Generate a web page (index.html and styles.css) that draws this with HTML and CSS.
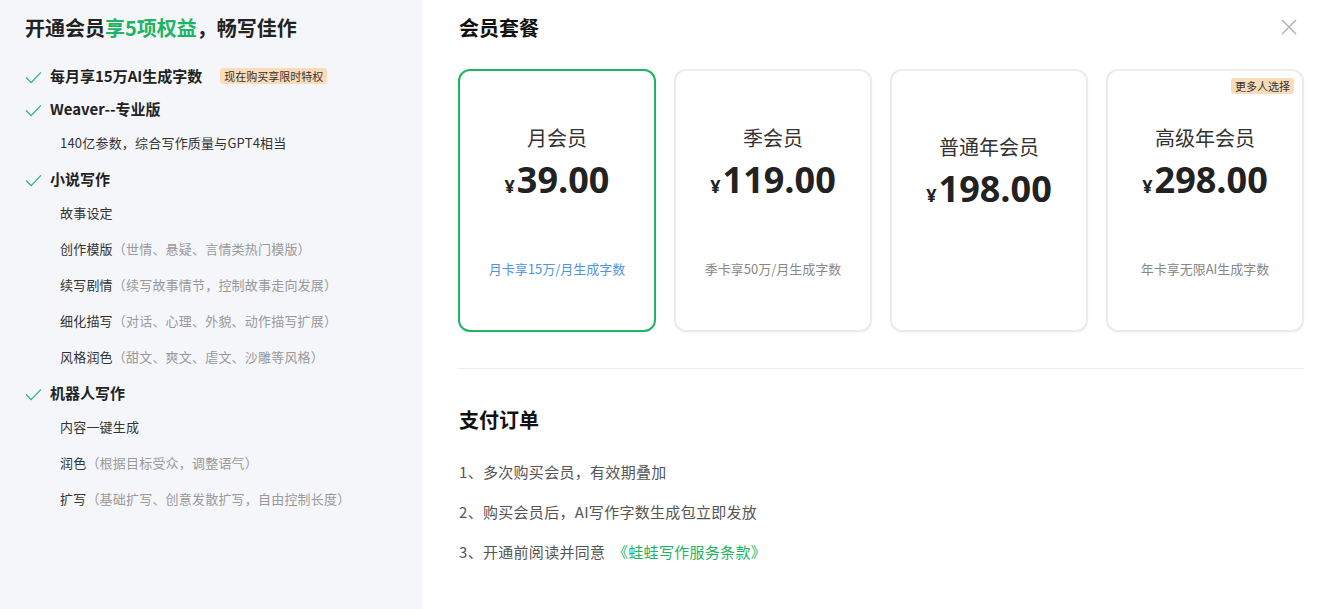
FILE: index.html
```html
<!DOCTYPE html>
<html lang="zh-CN">

<head>
    <meta charset="UTF-8">
    <meta name="viewport" content="width=device-width, initial-scale=1.0">
    <title>开通会员</title>
    <link rel="stylesheet" href="styles.css">
</head>

<body>
    <div class="vip-dialog">
        <!-- 左侧：会员权益 -->
        <aside class="benefits">
            <h1 class="benefits-title">开通会员<span class="green">享5项权益</span>，畅写佳作</h1>
            <ul class="benefit-list">
                <li class="benefit">
                    <svg class="check" viewBox="0 0 18 14"><polyline points="1,7 6.5,12.5 17,1.5" /></svg>
                    每月享15万AI生成字数
                    <span class="tag">现在购买享限时特权</span>
                </li>
                <li class="benefit">
                    <svg class="check" viewBox="0 0 18 14"><polyline points="1,7 6.5,12.5 17,1.5" /></svg>
                    Weaver--专业版
                </li>
                <li class="sub">140亿参数，综合写作质量与GPT4相当</li>
                <li class="benefit">
                    <svg class="check" viewBox="0 0 18 14"><polyline points="1,7 6.5,12.5 17,1.5" /></svg>
                    小说写作
                </li>
                <li class="sub">故事设定</li>
                <li class="sub">创作模版<span class="note">（世情、悬疑、言情类热门模版）</span></li>
                <li class="sub">续写剧情<span class="note">（续写故事情节，控制故事走向发展）</span></li>
                <li class="sub">细化描写<span class="note">（对话、心理、外貌、动作描写扩展）</span></li>
                <li class="sub">风格润色<span class="note">（甜文、爽文、虐文、沙雕等风格）</span></li>
                <li class="benefit">
                    <svg class="check" viewBox="0 0 18 14"><polyline points="1,7 6.5,12.5 17,1.5" /></svg>
                    机器人写作
                </li>
                <li class="sub">内容一键生成</li>
                <li class="sub">润色<span class="note">（根据目标受众，调整语气）</span></li>
                <li class="sub">扩写<span class="note">（基础扩写、创意发散扩写，自由控制长度）</span></li>
            </ul>
        </aside>

        <!-- 右侧：套餐与支付 -->
        <main class="plans">
            <div class="plans-header">
                <h2 class="section-title">会员套餐</h2>
                <button class="close-btn" aria-label="关闭">
                    <svg viewBox="0 0 16 16"><path d="M1 1 L15 15 M15 1 L1 15" /></svg>
                </button>
            </div>

            <div class="plan-grid">
                <div class="plan-card active">
                    <div class="plan-name">月会员</div>
                    <div class="plan-price"><span class="yen">¥</span>39.00</div>
                    <div class="plan-desc">月卡享15万/月生成字数</div>
                </div>
                <div class="plan-card">
                    <div class="plan-name">季会员</div>
                    <div class="plan-price"><span class="yen">¥</span>119.00</div>
                    <div class="plan-desc">季卡享50万/月生成字数</div>
                </div>
                <div class="plan-card">
                    <div class="plan-name">普通年会员</div>
                    <div class="plan-price"><span class="yen">¥</span>198.00</div>
                    <div class="plan-desc"></div>
                </div>
                <div class="plan-card">
                    <span class="tag corner">更多人选择</span>
                    <div class="plan-name">高级年会员</div>
                    <div class="plan-price"><span class="yen">¥</span>298.00</div>
                    <div class="plan-desc">年卡享无限AI生成字数</div>
                </div>
            </div>

            <hr class="divider">

            <h2 class="section-title order-title">支付订单</h2>
            <ol class="order-notes">
                <li>1、多次购买会员，有效期叠加</li>
                <li>2、购买会员后，AI写作字数生成包立即发放</li>
                <li>3、开通前阅读并同意 <a class="terms" href="#">《蛙蛙写作服务条款》</a></li>
            </ol>
        </main>
    </div>
</body>

</html>
```

FILE: styles.css
```css
* {
    box-sizing: border-box;
}

body {
    margin: 0;
    font-family: "Noto Sans CJK SC", "Noto Sans", sans-serif;
    color: #222;
    background-color: #fff;
}

.vip-dialog {
    display: flex;
    height: 609px;
}

.green {
    color: #1eb465;
}

/* 左侧权益 */
.benefits {
    width: 422px;
    flex-shrink: 0;
    background-color: #f5f6fa;
    padding: 16px 0 0 25px;
}

.benefits-title {
    margin: 0 0 19px;
    font-size: 20px;
    line-height: 24px;
    font-weight: bold;
    color: #222;
}

.benefit-list {
    list-style: none;
    margin: 0;
    padding: 0;
}

.benefit {
    display: flex;
    align-items: center;
    height: 33px;
    font-size: 15px;
    font-weight: bold;
    color: #222;
}

.sub + .benefit {
    margin-top: 1px;
}

.check {
    width: 17px;
    height: 13px;
    margin: 3px 8px 0 0;
    fill: none;
    stroke: #2bb47a;
    stroke-width: 1.4;
}

.sub {
    height: 36px;
    line-height: 36px;
    padding-left: 35px;
    font-size: 13px;
    letter-spacing: 0.2px;
    color: #333;
}

.note {
    color: #999;
}

.tag {
    display: inline-block;
    height: 16px;
    line-height: 16px;
    padding: 0 4px;
    margin-left: 18px;
    border-radius: 3px;
    background-color: #fbdcb9;
    font-size: 11px;
    font-weight: normal;
    color: #333;
}

/* 右侧套餐 */
.plans {
    flex: 1;
    padding: 16px 17px 0 36px;
}

.plans-header {
    display: flex;
    align-items: center;
    justify-content: space-between;
}

.section-title {
    margin: 0 0 0 1px;
    font-size: 20px;
    line-height: 24px;
    font-weight: bold;
    color: #111;
}

.close-btn {
    width: 18px;
    height: 18px;
    padding: 0;
    margin-right: 6px;
    border: none;
    background: none;
    cursor: pointer;
}

.close-btn svg {
    width: 16px;
    height: 16px;
    fill: none;
    stroke: #b5b5b5;
    stroke-width: 1.5;
}

.plan-grid {
    display: grid;
    grid-template-columns: repeat(4, 1fr);
    gap: 18px;
    margin-top: 29px;
}

.plan-card {
    position: relative;
    height: 263px;
    display: flex;
    flex-direction: column;
    align-items: center;
    justify-content: center;
    border: 2px solid #ececec;
    border-radius: 12px;
    background-color: #fff;
    box-shadow: 0 1px 2px rgba(0, 0, 0, 0.04);
}

.plan-card.active {
    border-color: #1eb465;
}

.plan-name {
    font-size: 20px;
    line-height: 28px;
    color: #333;
}

.plan-price {
    margin-top: 6px;
    font-family: "Open Sans", "Noto Sans", sans-serif;
    font-size: 36px;
    line-height: 44px;
    font-weight: bold;
    color: #222;
}

.yen {
    font-size: 18px;
    margin-right: 2px;
}

.plan-desc {
    margin-top: 52px;
    font-size: 13px;
    line-height: 18px;
    color: #888;
}

.plan-card.active .plan-desc {
    color: #4f93e6;
}

.tag.corner {
    position: absolute;
    top: 7px;
    right: 8px;
    margin: 0;
}

.divider {
    margin: 36px 0 0;
    border: none;
    border-top: 1px solid #ededed;
}

.order-title {
    margin-top: 39px;
}

.order-notes {
    list-style: none;
    margin: 30px 0 0 1px;
    padding: 0;
}

.order-notes li {
    height: 40px;
    line-height: 20px;
    font-size: 15px;
    letter-spacing: 0.3px;
    color: #555;
}

.terms {
    margin-left: 4px;
    color: #1eb465;
    text-decoration: none;
}
```
